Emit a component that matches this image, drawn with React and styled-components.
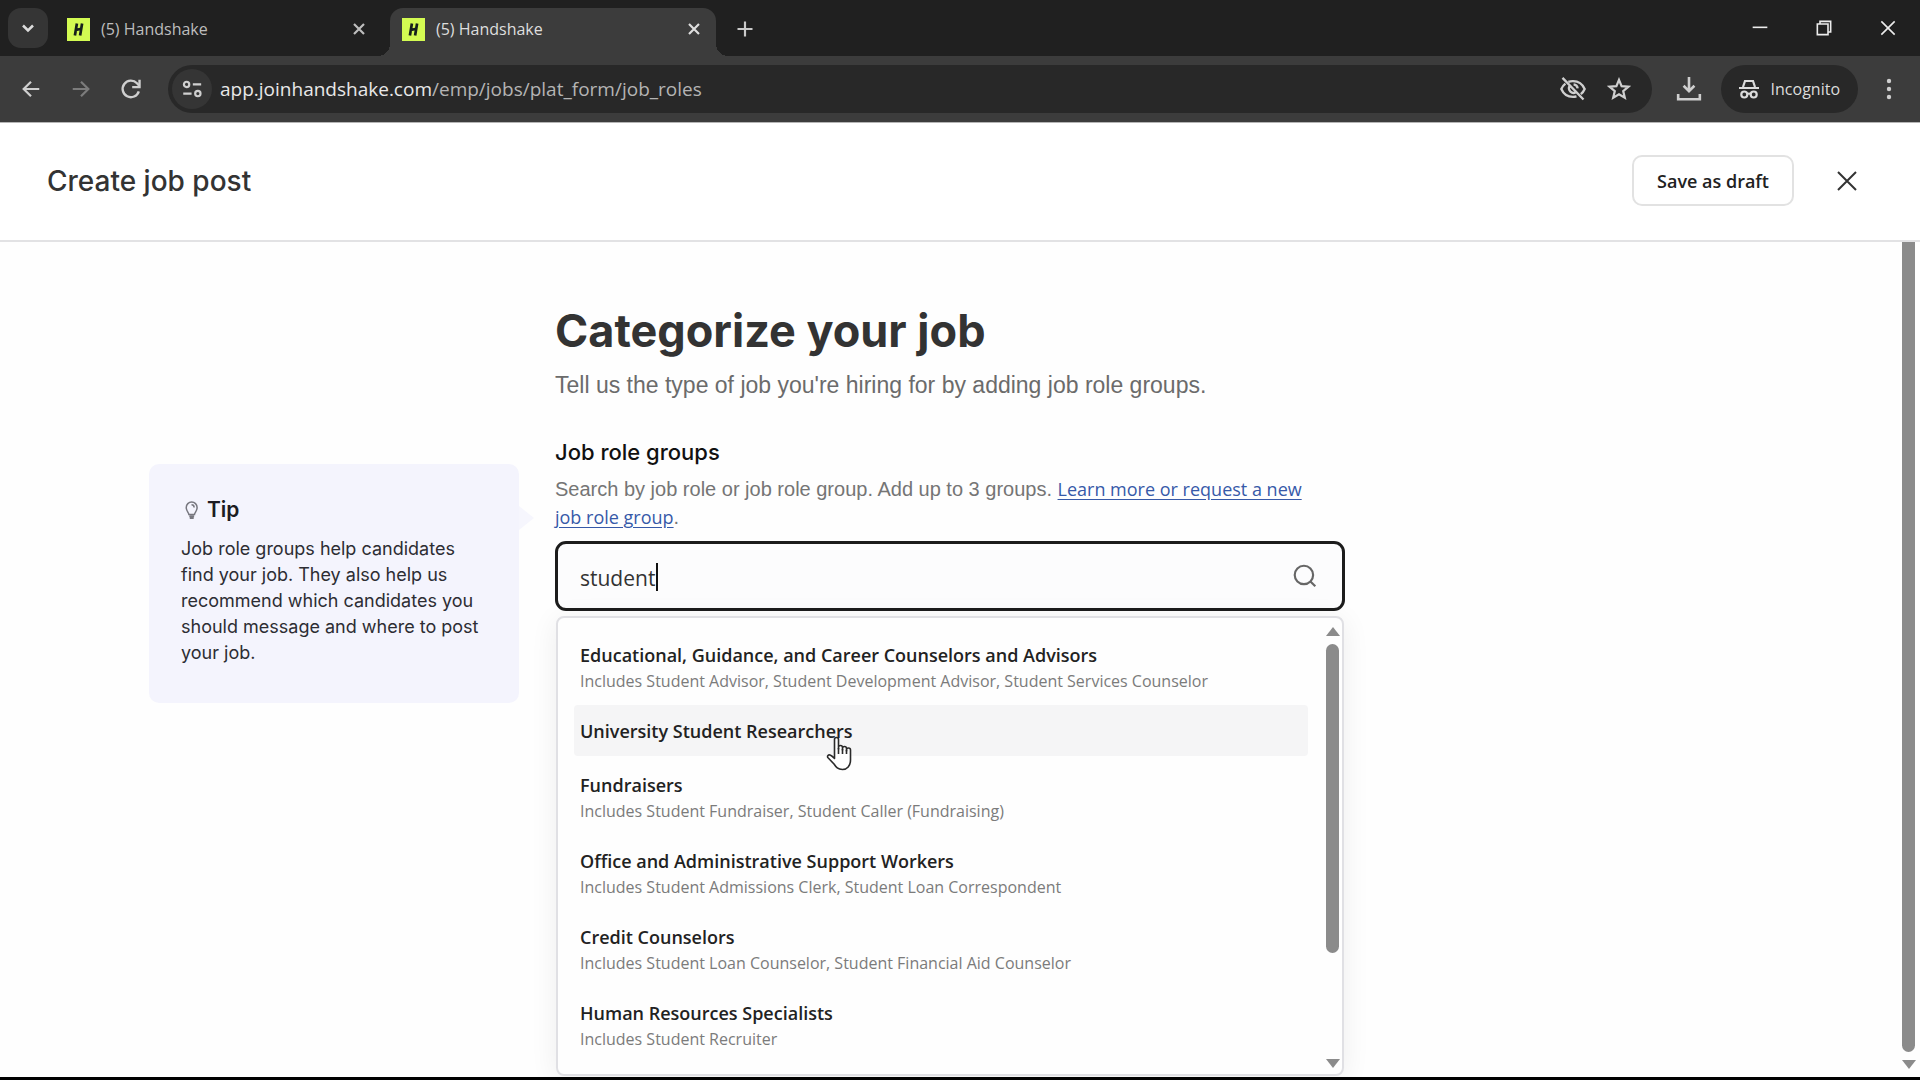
import React from "react";
import styled, { createGlobalStyle } from "styled-components";

const UI = `"Open Sans", "Noto Sans", sans-serif`;
const GROTESK = `"Liberation Sans", Arial, sans-serif`;
const DISPLAY = `Inter, "Liberation Sans", sans-serif`;

const GlobalStyle = createGlobalStyle`
  *, *::before, *::after { box-sizing: border-box; }
  body { margin: 0; background: #fff; font-family: ${UI}; }
  h1, h2, h3, p, ul { margin: 0; padding: 0; }
  button { font: inherit; color: inherit; border: 0; padding: 0; background: none; cursor: pointer; }
`;

const Window = styled.div`
  height: 100vh;
  display: flex;
  flex-direction: column;
  overflow: hidden;
  border-bottom: 3px solid #000;
`;

/* Browser chrome */
const TabStrip = styled.div`
  flex: none;
  display: flex;
  align-items: flex-end;
  height: 56px;
  padding-left: 8px;
  background: #202020;
  color: #c9c9c9;
`;

const IconButton = styled.button`
  flex: none;
  display: grid;
  place-items: center;
  width: ${(p) => p.$w || 40}px;
  height: ${(p) => p.$h || 40}px;
  color: ${(p) => p.$color || "inherit"};
`;

const TabSearch = styled(IconButton)`
  align-self: center;
  border-radius: 13px;
  background: #353535;
  color: #dcdcdc;
`;

const Tab = styled.div`
  position: relative;
  display: flex;
  align-items: center;
  gap: 11px;
  width: 326px;
  height: 48px;
  padding: 0 9px 6px 12px;
  font-size: 16px;
  line-height: 24px;
  border-radius: 13px 13px 0 0;
  color: ${(p) => (p.$active ? "#dedede" : "#bdbdbd")};
  background: ${(p) => (p.$active ? "#3c3c3c" : "transparent")};

  &::before, &::after {
    content: "";
    display: ${(p) => (p.$active ? "block" : "none")};
    position: absolute;
    bottom: 0;
    width: 12px;
    height: 12px;
  }
  &::before { left: -12px; background: radial-gradient(circle at 0 0, transparent 12px, #3c3c3c 12px); }
  &::after { right: -12px; background: radial-gradient(circle at 100% 0, transparent 12px, #3c3c3c 12px); }
`;

const TabTitle = styled.span`
  flex: 1;
`;

const Tabs = styled.div`
  display: flex;
  gap: 9px;
  margin-left: 7px;
`;

const NewTab = styled(IconButton)`
  margin: 0 0 7px 9px;
`;

const WindowControls = styled.div`
  display: flex;
  margin-left: auto;
  align-self: stretch;
  color: #ececec;
`;

const Toolbar = styled.div`
  flex: none;
  display: flex;
  align-items: center;
  height: 66px;
  padding: 0 11px 0 6px;
  background: #3c3c3c;
  color: #cfcfcf;
`;

const AddressBar = styled.div`
  flex: 1;
  display: flex;
  align-items: center;
  height: 48px;
  margin: 0 17px 0 12px;
  padding: 0 10px 0 4px;
  border-radius: 24px;
  background: #282828;
`;

const SiteInfo = styled(IconButton)`
  border-radius: 50%;
  background: #353535;
`;

const Url = styled.span`
  flex: 1;
  margin-left: 8px;
  font-size: 19px;
  line-height: 28px;
  color: #b4b4b4;
`;

const UrlHost = styled.span`
  color: #e8e8e8;
`;

const IncognitoChip = styled.button`
  display: flex;
  align-items: center;
  gap: 10px;
  height: 48px;
  margin: 0 11px 0 12px;
  padding: 0 18px 0 16px;
  border-radius: 24px;
  background: #282828;
  color: #dcdcdc;
  font-size: 16px;
  line-height: 24px;
`;

/* Page */
const Header = styled.header`
  flex: none;
  display: flex;
  align-items: center;
  height: 120px;
  padding: 0 49px 2px 47px;
  border-top: 1px solid #b5b5b5;
  border-bottom: 2px solid #e2e2e4;
  background: #fff;
`;

const HeaderTitle = styled.h2`
  flex: 1;
  font-family: ${DISPLAY};
  font-size: 28px;
  font-weight: 500;
  line-height: 36px;
  color: #333;
`;

const DraftButton = styled.button`
  height: 51px;
  padding: 0 23px;
  margin-right: 29px;
  border: 2px solid #e2e2e2;
  border-radius: 10px;
  font-size: 18px;
  font-weight: 600;
  color: #222;
`;

const Body = styled.div`
  flex: 1;
  min-height: 0;
  display: flex;
  background: #fefefe;
`;

const Main = styled.main`
  flex: 1;
  display: grid;
  grid-template-columns: 1fr 790px 1fr;
  column-gap: 36px;
  align-content: start;
  overflow: hidden;
  padding-top: 61px;
`;

const Tip = styled.aside`
  position: relative;
  justify-self: end;
  align-self: start;
  width: 370px;
  margin-top: 161px;
  padding: 32px 32px 37px;
  border-radius: 10px;
  background: #f4f4fd;

  &::after {
    content: "";
    position: absolute;
    left: 100%;
    top: 42px;
    border: 12px solid transparent;
    border-left: 15px solid #f6f6fd;
    border-right: 0;
  }
`;

const TipTitle = styled.h3`
  display: flex;
  align-items: center;
  gap: 5px;
  margin-bottom: 12px;
  font-family: ${DISPLAY};
  font-size: 21px;
  font-weight: 600;
  line-height: 28px;
  color: #1c1c22;
`;

const TipText = styled.p`
  font-family: ${DISPLAY};
  font-size: 18px;
  line-height: 26px;
  color: #2d2d33;
`;

const Title = styled.h1`
  margin: 0 0 8px;
  font-family: ${DISPLAY};
  font-size: 45px;
  font-weight: 700;
  line-height: 56px;
  color: #333;
`;

const Lead = styled.p`
  font-family: ${GROTESK};
  font-size: 23px;
  line-height: 36px;
  color: #6b6b6b;
`;

const Label = styled.label`
  display: block;
  margin: 34px 0 8px;
  font-family: ${DISPLAY};
  font-size: 22px;
  font-weight: 500;
  line-height: 30px;
  color: #111;
`;

const Help = styled.p`
  margin-bottom: 10px;
  padding-right: 24px;
  font-family: ${GROTESK};
  font-size: 20px;
  line-height: 28px;
  color: #757575;
`;

const HelpLink = styled.a`
  font-family: ${UI};
  font-size: 18px;
  color: #3659a8;
  text-decoration: underline;
  text-underline-offset: 3px;
`;

const Combo = styled.div`
  position: relative;
`;

const Field = styled.div`
  display: flex;
  align-items: center;
  height: 70px;
  padding: 0 24px 0 22px;
  border: 3px solid #1c1c1c;
  border-radius: 11px;
  background: #fcfcfd;
  color: #666;
`;

const SearchInput = styled.input`
  flex: 1;
  min-width: 0;
  border: 0;
  outline: 0;
  padding: 3px 0 0;
  background: transparent;
  font-family: ${UI};
  font-size: 21px;
  line-height: 32px;
  color: #333;
`;

const Caret = styled.span`
  position: absolute;
  left: 101px;
  top: 22px;
  width: 2px;
  height: 28px;
  background: #111;
`;

const Dropdown = styled.div`
  position: absolute;
  top: calc(100% + 5px);
  left: 1px;
  right: 1px;
  display: flex;
  height: 460px;
  border: 2px solid #e0e0e4;
  border-radius: 8px;
  background: #fefefe;
  box-shadow: 0 4px 28px rgba(0, 0, 0, 0.07);
`;

const OptionList = styled.ul`
  flex: 1;
  display: flex;
  flex-direction: column;
  gap: 3px;
  padding: 11px 16px;
  overflow: hidden;
  list-style: none;
`;

const Option = styled.li`
  flex: none;
  position: relative;
  min-height: 51px;
  padding: 12px 6px 9px;
  border-radius: 4px;
  background: ${(p) => (p.$hovered ? "#f5f5f6" : "transparent")};
  cursor: pointer;
`;

const OptionName = styled.div`
  font-size: 18px;
  font-weight: 600;
  line-height: 28px;
  color: #222;
`;

const OptionDetail = styled.div`
  font-size: 16px;
  line-height: 24px;
  color: #7b7b7b;
`;

const Pointer = styled.svg`
  position: absolute;
  left: 252px;
  top: 31px;
  z-index: 1;
`;

const ScrollTrack = styled.div`
  flex: none;
  display: flex;
  flex-direction: column;
  align-items: center;
  width: 17px;
  margin: ${(p) => (p.$inner ? "9px 1px 6px 0" : "0 3px 8px 0")};
`;

const ScrollThumb = styled.div`
  width: 13px;
  height: ${(p) => p.$size};
  margin: ${(p) => (p.$inner ? "8px 0 auto" : "0 0 auto")};
  border-radius: ${(p) => (p.$inner ? "7px" : "0 0 7px 7px")};
  background: #8b8b8b;
`;

const ScrollArrow = styled.div`
  flex: none;
  border: 7px solid transparent;
  border-${(p) => (p.$up ? "bottom" : "top")}: 9px solid #8b8b8b;
  border-${(p) => (p.$up ? "top" : "bottom")}: 0;
`;

function Icon({ size = 24, w = 2, children, ...rest }) {
  return (
    <svg width={size} height={size} viewBox="0 0 24 24" fill="none" stroke="currentColor" strokeWidth={w} aria-hidden="true" {...rest}>
      {children}
    </svg>
  );
}

const Favicon = () => (
  <svg width="23" height="23" viewBox="0 0 23 23" aria-hidden="true">
    <rect width="23" height="23" fill="#d3fb52" />
    <path d="M9.9 5.5 7.9 17.5M15.1 5.5l-2 12M8.8 12l5.6-1.2" stroke="#16201c" strokeWidth="2.7" fill="none" />
  </svg>
);

const Cross = ({ size, w, pad = 5 }) => (
  <Icon size={size} w={w}>
    <path d={`M${pad} ${pad}L${24 - pad} ${24 - pad}M${24 - pad} ${pad}L${pad} ${24 - pad}`} />
  </Icon>
);

const BrowserTab = ({ active }) => (
  <Tab $active={active}>
    <Favicon />
    <TabTitle>(5) Handshake</TabTitle>
    <IconButton $w={26} $h={26} aria-label="Close tab">
      <Cross size={20} w={2.6} pad={6} />
    </IconButton>
  </Tab>
);

const OPTIONS = [
  ["Educational, Guidance, and Career Counselors and Advisors", "Includes Student Advisor, Student Development Advisor, Student Services Counselor"],
  ["University Student Researchers"],
  ["Fundraisers", "Includes Student Fundraiser, Student Caller (Fundraising)"],
  ["Office and Administrative Support Workers", "Includes Student Admissions Clerk, Student Loan Correspondent"],
  ["Credit Counselors", "Includes Student Loan Counselor, Student Financial Aid Counselor"],
  ["Human Resources Specialists", "Includes Student Recruiter"],
];

export default function App() {
  return (
    <>
      <GlobalStyle />
      <Window>
        <TabStrip>
          <TabSearch aria-label="Search tabs">
            <Icon size={20} w={3}><path d="M6 9l6 6 6-6" /></Icon>
          </TabSearch>
          <Tabs>
            <BrowserTab />
            <BrowserTab active />
          </Tabs>
          <NewTab aria-label="New tab">
            <Icon size={20} w={2.6}><path d="M12 3v18M3 12h18" /></Icon>
          </NewTab>
          <WindowControls>
            <IconButton $w={64} $h={56} aria-label="Minimize">
              <Icon size={16} w={2.4}><path d="M1 11h22" /></Icon>
            </IconButton>
            <IconButton $w={64} $h={56} aria-label="Restore">
              <Icon size={16} w={2.4}><path d="M2 6h16v16H2zM6 6V2h16v16h-4" /></Icon>
            </IconButton>
            <IconButton $w={64} $h={56} aria-label="Close window">
              <Cross size={16} w={2.4} pad={2} />
            </IconButton>
          </WindowControls>
        </TabStrip>

        <Toolbar>
          <IconButton $w={50} aria-label="Back">
            <Icon size={22} w={2.4}><path d="M21 12H4M12 4l-8 8 8 8" /></Icon>
          </IconButton>
          <IconButton $w={50} $color="#7c7c7c" aria-label="Forward">
            <Icon size={22} w={2.4}><path d="M3 12h17M12 4l8 8-8 8" /></Icon>
          </IconButton>
          <IconButton $w={50} aria-label="Reload">
            <Icon size={22} w={2.6}>
              <path d="M20.5 14.5A9 9 0 1 1 18.5 5.8L21 8.5" />
              <path d="M21.3 2v8h-8" />
            </Icon>
          </IconButton>
          <AddressBar>
            <SiteInfo aria-label="View site information">
              <Icon size={20} w={2.6}>
                <circle cx="5.5" cy="6.5" r="3.2" />
                <path d="M13 6.5h10M1.5 17.5h10" />
                <circle cx="19" cy="17.5" r="3.2" />
              </Icon>
            </SiteInfo>
            <Url><UrlHost>app.joinhandshake.com</UrlHost>/emp/jobs/plat_form/job_roles</Url>
            <IconButton $w={46} aria-label="Third-party cookies blocked">
              <Icon size={28} w={2}>
                <path d="M8 5.9A11 11 0 0 1 12 5.2c4.5 0 8.2 2.6 10 6.8a11.5 11.5 0 0 1-3.3 4.4M15 18.4c-1 .3-2 .4-3 .4-4.5 0-8.2-2.6-10-6.8a11.5 11.5 0 0 1 3.5-4.6" />
                <path d="M3 2.5l18 18.5M14.5 14.8A4 4 0 0 1 9 9.5M12.5 8a4 4 0 0 1 3.5 3.5" />
              </Icon>
            </IconButton>
            <IconButton $w={46} aria-label="Bookmark this tab">
              <Icon size={24} w={2.2}>
                <path d="M12 2.8l2.6 6.3 6.8.6-5.2 4.4 1.6 6.7L12 17.3l-5.8 3.5 1.6-6.7L2.6 9.7l6.8-.6z" />
              </Icon>
            </IconButton>
          </AddressBar>
          <IconButton aria-label="Downloads">
            <Icon size={26} w={2.4}>
              <path d="M12 1v13M7 9l5 5 5-5M2 16.5V21.5h20v-5" />
            </Icon>
          </IconButton>
          <IncognitoChip>
            <Icon size={24} w={2.2}>
              <path d="M6 10L8 4h8l2 6M2 11h20" />
              <circle cx="7.3" cy="17.5" r="3" />
              <circle cx="16.7" cy="17.5" r="3" />
              <path d="M10.3 17q1.7-1 3.4 0" />
            </Icon>
            Incognito
          </IncognitoChip>
          <IconButton aria-label="Menu">
            <Icon size={24}>
              <g fill="currentColor" stroke="none">
                <circle cx="12" cy="4" r="2.2" />
                <circle cx="12" cy="12" r="2.2" />
                <circle cx="12" cy="20" r="2.2" />
              </g>
            </Icon>
          </IconButton>
        </Toolbar>

        <Header>
          <HeaderTitle>Create job post</HeaderTitle>
          <DraftButton>Save as draft</DraftButton>
          <IconButton $w={48} $h={48} $color="#333" aria-label="Close">
            <Cross size={24} w={2} pad={3} />
          </IconButton>
        </Header>

        <Body>
          <Main>
            <Tip>
              <TipTitle>
                <Icon size={21} w={1.7} color="#77777f">
                  <path d="M9 16.5c0-2-3-3.5-3-8a6.2 6.2 0 0 1 12.4 0c0 4.500-3 6-3 8zM12 5.500a3 3 0 0 1 3 3" />
                  <path d="M9.500 18.500h5.500M10 20.500h4.500" strokeWidth="2.2" />
                </Icon>
                Tip
              </TipTitle>
              <TipText>
                Job role groups help candidates find your job. They also help us recommend which candidates you should message and where to post your job.
              </TipText>
            </Tip>

            <section>
              <Title>Categorize your job</Title>
              <Lead>Tell us the type of job you're hiring for by adding job role groups.</Lead>
              <Label htmlFor="job-role">Job role groups</Label>
              <Help>
                Search by job role or job role group. Add up to 3 groups.{" "}
                <HelpLink href="#request">Learn more or request a new job role group</HelpLink>.
              </Help>
              <Combo>
                <Field>
                  <SearchInput id="job-role" type="text" role="combobox" aria-expanded="true" aria-controls="job-role-list" defaultValue="student" />
                  <Icon size={26} w={2}>
                    <circle cx="11" cy="11" r="8.5" />
                    <path d="M17 17l4.5 4.5" />
                  </Icon>
                </Field>
                <Caret aria-hidden="true" />
                <Dropdown>
                  <OptionList id="job-role-list" role="listbox">
                    {OPTIONS.map(([name, detail]) => (
                      <Option key={name} role="option" aria-selected={!detail} $hovered={!detail}>
                        <OptionName>{name}</OptionName>
                        {detail && <OptionDetail>{detail}</OptionDetail>}
                        {!detail && (
                          <Pointer width="28" height="36" viewBox="0 0 28 36" aria-hidden="true">
                            <path
                              d="M8.500 20V3.500a2 2 0 0 1 4 0V13v-1.500a2 2 0 0 1 4 0V14v-1.500a2 2 0 0 1 4 0V15v-1a2 2 0 0 1 4 0v10c0 6-3.500 9.500-8 9.500-5 0-6.500-2.500-8.500-5.500L1.800 21.500c-.8-1.500.5-3 2.200-2.500 1.800.6 3 2 4.500 3.500z"
                              fill="#fff" stroke="#2a2a2a" strokeWidth="1.6" strokeLinejoin="round"
                            />
                            <path d="M12.500 12v6M16.500 13v5M20.500 14v4" stroke="#2a2a2a" strokeWidth="1.6" />
                          </Pointer>
                        )}
                      </Option>
                    ))}
                  </OptionList>
                  <ScrollTrack $inner aria-hidden="true">
                    <ScrollArrow $up />
                    <ScrollThumb $inner $size="309px" />
                    <ScrollArrow />
                  </ScrollTrack>
                </Dropdown>
              </Combo>
            </section>
          </Main>
          <ScrollTrack aria-hidden="true">
            <ScrollThumb $size="98%" />
            <ScrollArrow />
          </ScrollTrack>
        </Body>
      </Window>
    </>
  );
}
